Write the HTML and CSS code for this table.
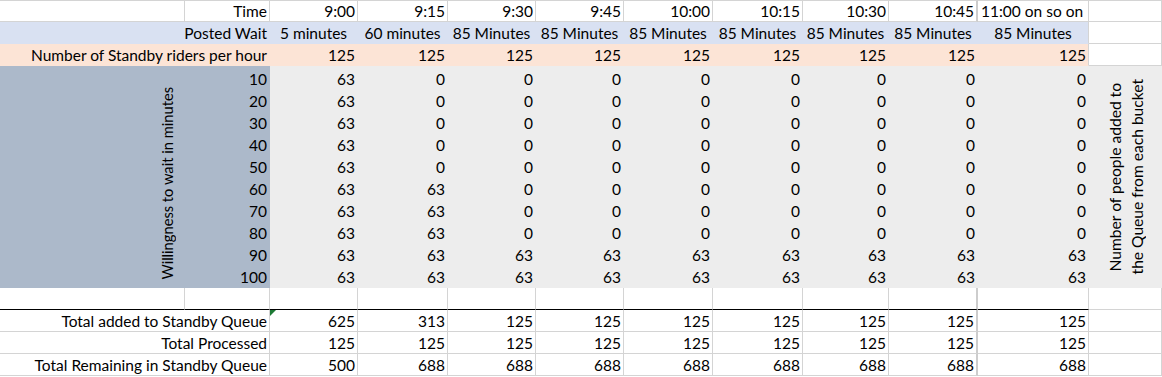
FILE: index.html
```html
<!DOCTYPE html>
<html>
<head>
<meta charset="utf-8">
<link rel="stylesheet" href="styles.css">
</head>
<body>
<div class="sheet">
  <!-- row 1 -->
  <div class="c top"></div>
  <div class="c top r">Time</div>
  <div class="c top r">9:00</div>
  <div class="c top r">9:15</div>
  <div class="c top r">9:30</div>
  <div class="c top r">9:45</div>
  <div class="c top r">10:00</div>
  <div class="c top r">10:15</div>
  <div class="c top r">10:30</div>
  <div class="c top r thick">10:45</div>
  <div class="c top l">11:00 on so on</div>
  <div class="c top"></div>
  <!-- row 2 -->
  <div class="c blue r span2">Posted Wait</div>
  <div class="c blue m">5 minutes</div>
  <div class="c blue m">60 minutes</div>
  <div class="c blue m">85 Minutes</div>
  <div class="c blue m">85 Minutes</div>
  <div class="c blue m">85 Minutes</div>
  <div class="c blue m">85 Minutes</div>
  <div class="c blue m">85 Minutes</div>
  <div class="c blue m">85 Minutes</div>
  <div class="c blue m edge">85 Minutes</div>
  <div class="c"></div>
  <!-- row 3 -->
  <div class="c peach r span2">Number of Standby riders per hour</div>
  <div class="c peach r">125</div>
  <div class="c peach r">125</div>
  <div class="c peach r">125</div>
  <div class="c peach r">125</div>
  <div class="c peach r">125</div>
  <div class="c peach r">125</div>
  <div class="c peach r">125</div>
  <div class="c peach r">125</div>
  <div class="c peach r edge">125</div>
  <div class="c"></div>
  <!-- rows 4-13 -->
  <div class="c slate vhead"><span class="vt">Willingness to wait in minutes</span></div>
  <div class="c slate r">10</div>
  <div class="c gray r">63</div><div class="c gray r">0</div><div class="c gray r">0</div><div class="c gray r">0</div><div class="c gray r">0</div><div class="c gray r">0</div><div class="c gray r">0</div><div class="c gray r">0</div><div class="c gray r">0</div>
  <div class="c gray vnote"><span class="vt">Number of people added to<br>the Queue from each bucket</span></div>

  <div class="c slate r">20</div>
  <div class="c gray r">63</div><div class="c gray r">0</div><div class="c gray r">0</div><div class="c gray r">0</div><div class="c gray r">0</div><div class="c gray r">0</div><div class="c gray r">0</div><div class="c gray r">0</div><div class="c gray r">0</div>

  <div class="c slate r">30</div>
  <div class="c gray r">63</div><div class="c gray r">0</div><div class="c gray r">0</div><div class="c gray r">0</div><div class="c gray r">0</div><div class="c gray r">0</div><div class="c gray r">0</div><div class="c gray r">0</div><div class="c gray r">0</div>

  <div class="c slate r">40</div>
  <div class="c gray r">63</div><div class="c gray r">0</div><div class="c gray r">0</div><div class="c gray r">0</div><div class="c gray r">0</div><div class="c gray r">0</div><div class="c gray r">0</div><div class="c gray r">0</div><div class="c gray r">0</div>

  <div class="c slate r">50</div>
  <div class="c gray r">63</div><div class="c gray r">0</div><div class="c gray r">0</div><div class="c gray r">0</div><div class="c gray r">0</div><div class="c gray r">0</div><div class="c gray r">0</div><div class="c gray r">0</div><div class="c gray r">0</div>

  <div class="c slate r">60</div>
  <div class="c gray r">63</div><div class="c gray r">63</div><div class="c gray r">0</div><div class="c gray r">0</div><div class="c gray r">0</div><div class="c gray r">0</div><div class="c gray r">0</div><div class="c gray r">0</div><div class="c gray r">0</div>

  <div class="c slate r">70</div>
  <div class="c gray r">63</div><div class="c gray r">63</div><div class="c gray r">0</div><div class="c gray r">0</div><div class="c gray r">0</div><div class="c gray r">0</div><div class="c gray r">0</div><div class="c gray r">0</div><div class="c gray r">0</div>

  <div class="c slate r">80</div>
  <div class="c gray r">63</div><div class="c gray r">63</div><div class="c gray r">0</div><div class="c gray r">0</div><div class="c gray r">0</div><div class="c gray r">0</div><div class="c gray r">0</div><div class="c gray r">0</div><div class="c gray r">0</div>

  <div class="c slate r">90</div>
  <div class="c gray r">63</div><div class="c gray r">63</div><div class="c gray r">63</div><div class="c gray r">63</div><div class="c gray r">63</div><div class="c gray r">63</div><div class="c gray r">63</div><div class="c gray r">63</div><div class="c gray r">63</div>

  <div class="c slate r">100</div>
  <div class="c gray r">63</div><div class="c gray r">63</div><div class="c gray r">63</div><div class="c gray r">63</div><div class="c gray r">63</div><div class="c gray r">63</div><div class="c gray r">63</div><div class="c gray r">63</div><div class="c gray r">63</div>

  <!-- row 14 -->
  <div class="c blk"></div><div class="c blk"></div><div class="c blk"></div><div class="c blk"></div><div class="c blk"></div><div class="c blk"></div><div class="c blk"></div><div class="c blk"></div><div class="c blk"></div><div class="c blk thick"></div><div class="c blk"></div><div class="c"></div>

  <!-- row 15 -->
  <div class="c r span2">Total added to Standby Queue</div>
  <div class="c r tri">625</div>
  <div class="c r">313</div>
  <div class="c r">125</div>
  <div class="c r">125</div>
  <div class="c r">125</div>
  <div class="c r">125</div>
  <div class="c r">125</div>
  <div class="c r thick">125</div>
  <div class="c r">125</div>
  <div class="c"></div>
  <!-- row 16 -->
  <div class="c r span2">Total Processed</div>
  <div class="c r">125</div>
  <div class="c r">125</div>
  <div class="c r">125</div>
  <div class="c r">125</div>
  <div class="c r">125</div>
  <div class="c r">125</div>
  <div class="c r">125</div>
  <div class="c r thick">125</div>
  <div class="c r">125</div>
  <div class="c"></div>
  <!-- row 17 -->
  <div class="c r span2">Total Remaining in Standby Queue</div>
  <div class="c r">500</div>
  <div class="c r">688</div>
  <div class="c r">688</div>
  <div class="c r">688</div>
  <div class="c r">688</div>
  <div class="c r">688</div>
  <div class="c r">688</div>
  <div class="c r thick">688</div>
  <div class="c r">688</div>
  <div class="c"></div>
</div>
</body>
</html>
```

FILE: styles.css
```css
* { box-sizing: border-box; }
html, body { margin: 0; padding: 0; background: #ffffff; }
body {
  font-family: Lato, "Liberation Sans", sans-serif;
  font-size: 15.5px;
  color: #000000;
}
.sheet {
  display: grid;
  width: 1162px;
  grid-template-columns: 185px 85px 88px 90px 88px 88px 89px 90px 86px 89px 111px 73px;
  grid-template-rows: repeat(3, 22px) 24px repeat(9, 22px) repeat(4, 22px);
}
.c {
  display: flex;
  align-items: flex-end;
  padding: 0 2px 1px 3px;
  line-height: 17px;
  white-space: nowrap;
  border-right: 1px solid #d4d4d4;
  border-bottom: 1px solid #d4d4d4;
}
.top { border-top: 1px solid #d4d4d4; }
.r { justify-content: flex-end; }
.l { justify-content: flex-start; }
.m { justify-content: center; padding-left: 0; padding-right: 0; }
.span2 { grid-column: span 2; }

.blue { background: #d9e1f2; border-color: #d9e1f2; }
.peach { background: #fce4d6; border-color: #fce4d6; }
.slate { background: #acb9ca; border-color: #acb9ca; }
.gray { background: #ededed; border-color: #ededed; }
.blue.edge, .peach.edge { border-right-color: #d4d4d4; }

.blk { border-bottom-color: #000000; }
.thick { border-right: 2px solid #cdcdcd; }

.vhead {
  grid-row: span 10;
  justify-content: flex-end;
  padding: 0 6px 7px 0;
}
.vhead .vt { font-size: 14.7px; }
.vnote {
  grid-row: span 10;
  justify-content: center;
  align-items: center;
  padding: 0 0 0 2px;
  border-right-color: #ededed;
}
.vnote .vt { font-size: 15.6px; }
.vt {
  writing-mode: vertical-rl;
  transform: rotate(180deg);
  line-height: 22px;
  text-align: center;
  white-space: nowrap;
}
.tri { position: relative; }
.tri::before {
  content: "";
  position: absolute;
  top: 0;
  left: 0;
  border-top: 6px solid #1d7a35;
  border-right: 6px solid transparent;
}
```
